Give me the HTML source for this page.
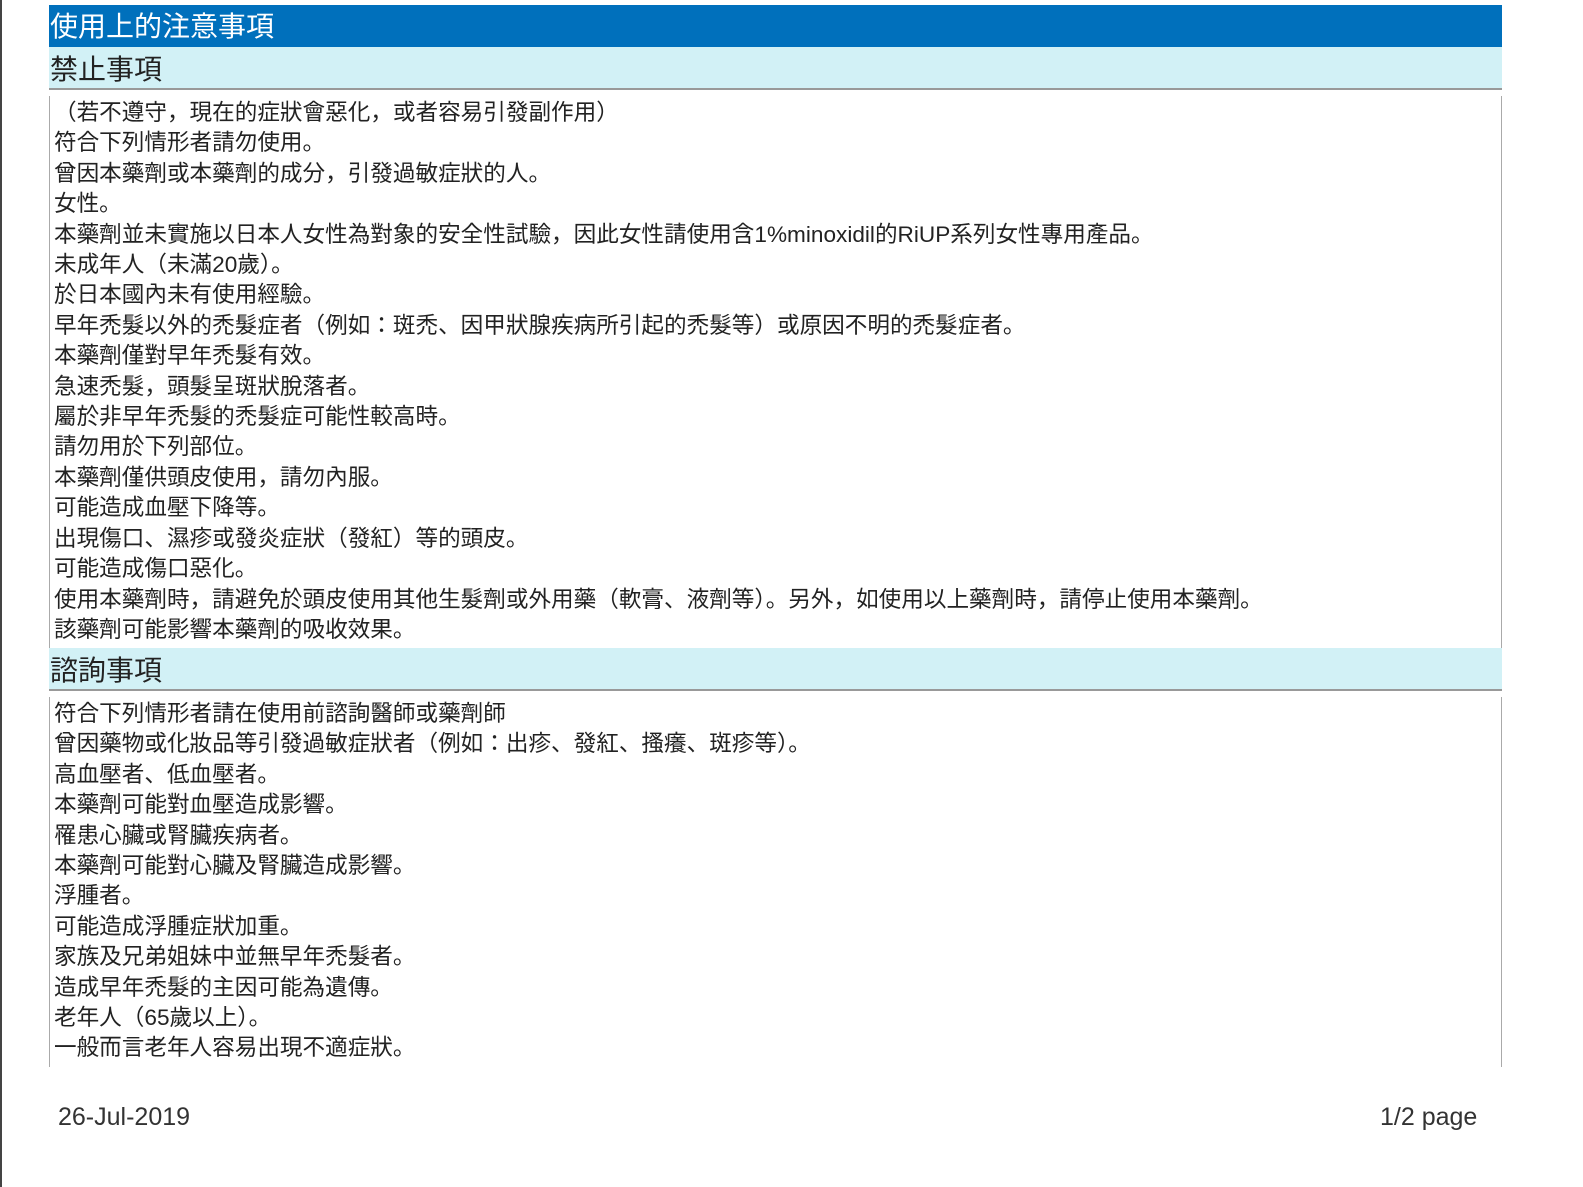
<!DOCTYPE html>
<html><head><meta charset="utf-8"><style>
body{margin:0;width:1583px;height:1187px;background:#fff;position:relative;overflow:hidden;font-family:"Liberation Sans","Noto Sans CJK JP",sans-serif;color:#222}
.lb{position:absolute;left:0;top:0;width:2px;height:1187px;background:#444}
.h1{position:absolute;left:49px;top:5px;width:1453px;height:42px;background:#0070bc;color:#fff;font-size:28px;line-height:44px;padding-left:1px;box-sizing:border-box}
.h2{position:absolute;left:49px;width:1453px;height:43px;background:#d2f1f6;border-bottom:2px solid #999;font-size:28px;line-height:45px;box-sizing:border-box;padding-left:1px;color:#222}
.box{position:absolute;left:49px;width:1453px;border-left:1px solid #aaa;border-right:1px solid #aaa;box-sizing:border-box;padding-left:4px;padding-top:2px;font-size:22.6px;line-height:30.4px}
.f{position:absolute;top:1100px;font-size:25px;color:#333;line-height:34px}
</style></head><body>
<div class="lb"></div>
<div class="h1">使用上的注意事項</div>
<div class="h2" style="top:47px">禁止事項</div>
<div class="box" style="top:96px;height:552px">（若不遵守，現在的症狀會惡化，或者容易引發副作用）<br>符合下列情形者請勿使用。<br>曾因本藥劑或本藥劑的成分，引發過敏症狀的人。<br>女性。<br>本藥劑並未實施以日本人女性為對象的安全性試驗，因此女性請使用含1%minoxidil的RiUP系列女性專用產品。<br>未成年人（未滿20歲）。<br>於日本國內未有使用經驗。<br>早年禿髮以外的禿髮症者（例如：斑禿、因甲狀腺疾病所引起的禿髮等）或原因不明的禿髮症者。<br>本藥劑僅對早年禿髮有效。<br>急速禿髮，頭髮呈斑狀脫落者。<br>屬於非早年禿髮的禿髮症可能性較高時。<br>請勿用於下列部位。<br>本藥劑僅供頭皮使用，請勿內服。<br>可能造成血壓下降等。<br>出現傷口、濕疹或發炎症狀（發紅）等的頭皮。<br>可能造成傷口惡化。<br>使用本藥劑時，請避免於頭皮使用其他生髮劑或外用藥（軟膏、液劑等）。另外，如使用以上藥劑時，請停止使用本藥劑。<br>該藥劑可能影響本藥劑的吸收效果。</div>
<div class="h2" style="top:648px">諮詢事項</div>
<div class="box" style="top:697px;height:370px">符合下列情形者請在使用前諮詢醫師或藥劑師<br>曾因藥物或化妝品等引發過敏症狀者（例如：出疹、發紅、搔癢、斑疹等）。<br>高血壓者、低血壓者。<br>本藥劑可能對血壓造成影響。<br>罹患心臟或腎臟疾病者。<br>本藥劑可能對心臟及腎臟造成影響。<br>浮腫者。<br>可能造成浮腫症狀加重。<br>家族及兄弟姐妹中並無早年禿髮者。<br>造成早年禿髮的主因可能為遺傳。<br>老年人（65歲以上）。<br>一般而言老年人容易出現不適症狀。</div>
<div class="f" style="left:58px">26-Jul-2019</div>
<div class="f" style="left:1380px">1/2 page</div>
</body></html>
